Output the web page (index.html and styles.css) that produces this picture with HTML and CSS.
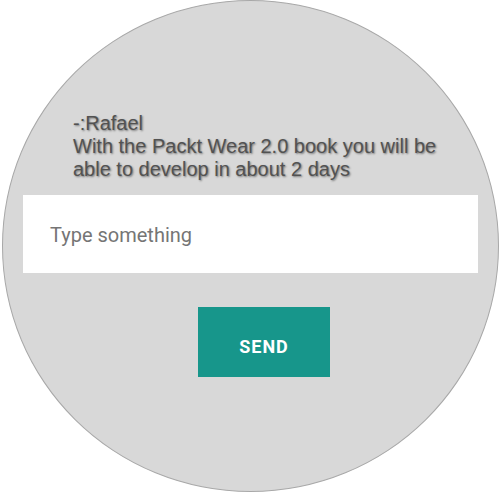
FILE: index.html
```html
<!DOCTYPE html>
<html>
<head>
<meta charset="utf-8">
<link rel="stylesheet" href="styles.css">
</head>
<body>
<div class="watch">
  <div class="message">
    <div>-:Rafael</div>
    <div>With the Packt Wear 2.0 book you will be able to develop in about 2 days</div>
  </div>
  <div class="input">Type something</div>
  <button class="send">SEND</button>
</div>
</body>
</html>
```
FILE: styles.css
```css
html, body {
  margin: 0;
  padding: 0;
  background: #ffffff;
}
body {
  width: 501px;
  height: 494px;
  overflow: hidden;
}
.watch {
  box-sizing: border-box;
  width: 497px;
  height: 492px;
  margin-left: 2px;
  border-radius: 50%;
  background: #d8d8d8;
  border: 1px solid #a8a8a8;
  display: flex;
  flex-direction: column;
  padding-top: 111px;
}
.message {
  padding-left: 70px;
  padding-right: 58px;
  font-family: "Liberation Sans", Arial, sans-serif;
  font-size: 20px;
  line-height: 23px;
  color: #525252;
  text-shadow: 1px 1px 2px rgba(0, 0, 0, 0.45);
}
.input {
  box-sizing: border-box;
  margin: 14px 20px 0 20px;
  height: 78px;
  background: #ffffff;
  display: flex;
  align-items: center;
  padding-left: 27px;
  padding-top: 2px;
  font-family: Roboto, sans-serif;
  font-size: 20px;
  color: #757575;
}
.send {
  align-self: flex-start;
  margin: 34px 0 0 195px;
  width: 132px;
  height: 70px;
  border: none;
  background: #17968b;
  color: #ffffff;
  font-family: Roboto, sans-serif;
  font-weight: 700;
  font-size: 18px;
  letter-spacing: 1px;
  padding: 8px 0 0 0;
}
```
